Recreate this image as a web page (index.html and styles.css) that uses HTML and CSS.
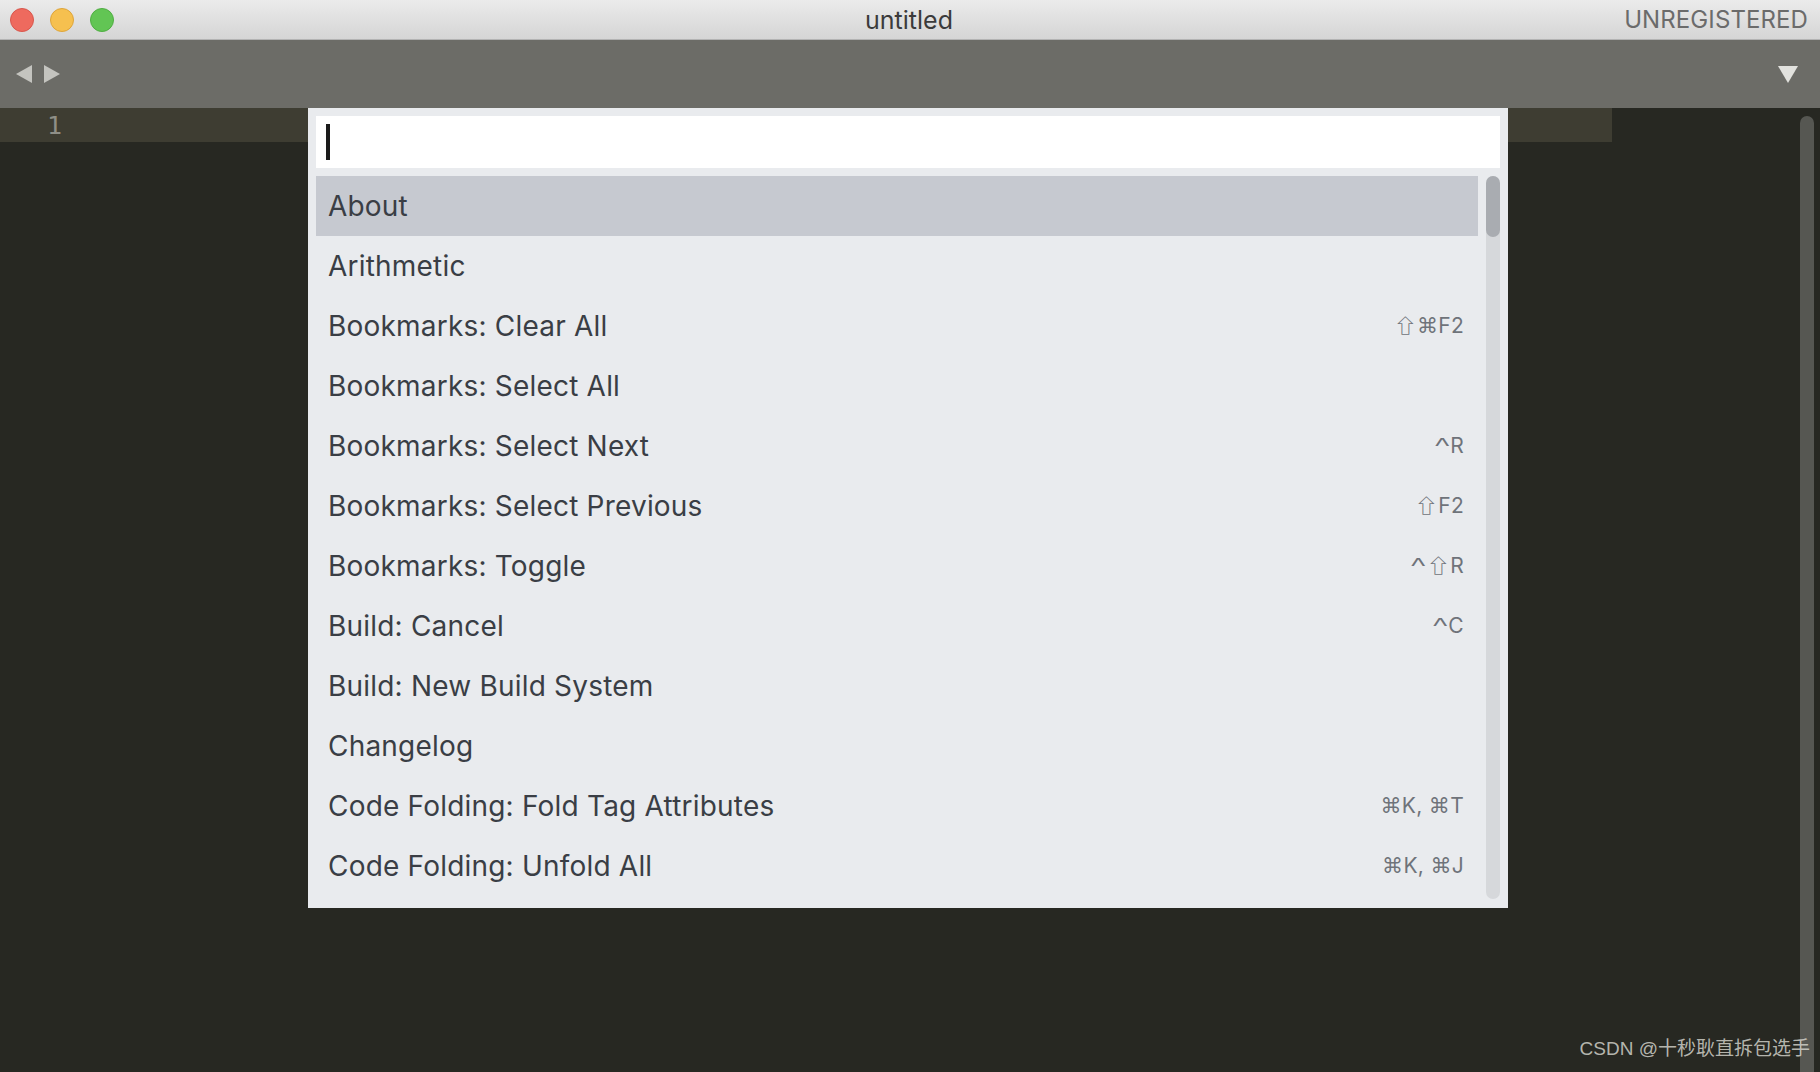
FILE: index.html
```html
<!DOCTYPE html>
<html>
<head>
<meta charset="utf-8">
<link rel="stylesheet" href="styles.css">
</head>
<body>
<div class="window">
  <header class="titlebar">
    <div class="lights">
      <span class="light red"></span>
      <span class="light yellow"></span>
      <span class="light green"></span>
    </div>
    <div class="title">untitled</div>
    <div class="unreg">UNREGISTERED</div>
  </header>
  <div class="tabbar">
    <div class="navs">
      <svg width="16" height="18" viewBox="0 0 16 18"><path d="M16 0 L0 9 L16 18 Z" fill="#c4c4bf"/></svg>
      <svg width="16" height="18" viewBox="0 0 16 18"><path d="M0 0 L16 9 L0 18 Z" fill="#c4c4bf"/></svg>
    </div>
    <svg class="dropdown" width="20" height="17" viewBox="0 0 20 17"><path d="M0 0 L20 0 L10 17 Z" fill="#e2e2de"/></svg>
  </div>
  <main class="editor">
    <div class="textarea">
      <div class="line current">
        <span class="gutter">1</span>
      </div>
    </div>
    <div class="minimap"></div>
    <div class="vscroll"></div>

    <div class="palette">
      <div class="input"><span class="caret"></span></div>
      <div class="listwrap">
        <ul class="list">
          <li class="item selected"><span class="name">About</span></li>
          <li class="item"><span class="name">Arithmetic</span></li>
          <li class="item"><span class="name">Bookmarks: Clear All</span><span class="key"><span class="shift">⇧</span><span class="cmd">⌘</span>F2</span></li>
          <li class="item"><span class="name">Bookmarks: Select All</span></li>
          <li class="item"><span class="name">Bookmarks: Select Next</span><span class="key"><span class="ctrl">^</span>R</span></li>
          <li class="item"><span class="name">Bookmarks: Select Previous</span><span class="key"><span class="shift">⇧</span>F2</span></li>
          <li class="item"><span class="name">Bookmarks: Toggle</span><span class="key"><span class="ctrl">^</span><span class="shift">⇧</span>R</span></li>
          <li class="item"><span class="name">Build: Cancel</span><span class="key"><span class="ctrl">^</span>C</span></li>
          <li class="item"><span class="name">Build: New Build System</span></li>
          <li class="item"><span class="name">Changelog</span></li>
          <li class="item"><span class="name">Code Folding: Fold Tag Attributes</span><span class="key"><span class="cmd">⌘</span>K, <span class="cmd">⌘</span>T</span></li>
          <li class="item"><span class="name">Code Folding: Unfold All</span><span class="key"><span class="cmd">⌘</span>K, <span class="cmd">⌘</span>J</span></li>
        </ul>
        <div class="track"><div class="thumb"></div></div>
      </div>
    </div>

    <div class="watermark">CSDN @十秒耿直拆包选手</div>
  </main>
</div>
</body>
</html>
```

FILE: styles.css
```css
* { box-sizing: border-box; }
html, body { margin: 0; padding: 0; }
body {
  width: 1820px;
  height: 1072px;
  overflow: hidden;
  background: #272822;
  font-family: Inter, "Noto Sans", sans-serif;
}
.window {
  display: flex;
  flex-direction: column;
  height: 1072px;
}
.titlebar {
  height: 40px;
  flex: none;
  display: grid;
  grid-template-columns: 1fr auto 1fr;
  align-items: center;
  background: linear-gradient(#ebebeb, #d5d5d5);
  border-bottom: 1px solid #b3b3b3;
  padding: 0 12px 0 10px;
}
.lights { display: flex; gap: 16px; }
.light {
  width: 24px; height: 24px; border-radius: 50%;
  display: block;
}
.red { background: #ee6a5e; border: 1px solid #d8574d; }
.yellow { background: #f6c04f; border: 1px solid #dea53a; }
.green { background: #62c554; border: 1px solid #50ae43; }
.title {
  text-align: center;
  font-size: 25px;
  color: #3b3b3b;
}
.unreg {
  justify-self: end;
  font-size: 24px;
  color: #6b6b6b;
  letter-spacing: 0.1px;
}
.tabbar {
  height: 68px;
  flex: none;
  background: #6c6c67;
  display: flex;
  align-items: center;
  justify-content: space-between;
  padding: 0 22px 0 16px;
}
.navs { display: flex; gap: 12px; }
.dropdown { display: block; }
.editor {
  flex: 1;
  display: flex;
  position: relative;
  padding-right: 6px;
}
.textarea { width: 1612px; flex: none; }
.line.current {
  height: 34px;
  background: #3e3d32;
  display: flex;
  align-items: center;
}
.gutter {
  width: 62px;
  text-align: right;
  font-family: "DejaVu Sans Mono", monospace;
  font-size: 25px;
  color: #8f8f87;
}
.minimap { flex: 1; }
.vscroll {
  width: 14px;
  margin-top: 8px;
  background: #565752;
  border-radius: 7px 7px 0 0;
}
.palette {
  position: absolute;
  left: 308px;
  top: 0;
  width: 1200px;
  height: 800px;
  background: #e9ebee;
  padding: 8px;
  display: flex;
  flex-direction: column;
  gap: 8px;
}
.input {
  height: 52px;
  flex: none;
  background: #fff;
  display: flex;
  align-items: center;
  padding-left: 10px;
}
.caret {
  width: 4px;
  height: 36px;
  background: #1b1b1b;
  display: block;
}
.listwrap {
  height: 723px;
  display: flex;
  gap: 8px;
}
.list {
  list-style: none;
  margin: 0;
  padding: 0;
  flex: 1;
  overflow: hidden;
}
.item {
  height: 60px;
  display: flex;
  align-items: center;
  justify-content: space-between;
  padding: 0 14px 0 12px;
}
.item.selected { background: #c6c9d0; }
.name {
  font-size: 28px;
  color: #3a3e45;
  letter-spacing: 0.2px;
}
.key {
  font-family: Inter, "DejaVu Sans", sans-serif;
  font-size: 21px;
  line-height: 24px;
  color: #6f737a;
  letter-spacing: 0.3px;
}
.shift {
  display: inline-block;
  font-family: "Noto Sans CJK JP", "DejaVu Sans", sans-serif;
  font-size: 19px;
  line-height: 20px;
  transform: scaleX(1.25);
  margin: 0 2px;
}
.cmd {
  font-family: "DejaVu Sans", sans-serif;
  font-size: 21px;
}
.ctrl {
  display: inline-block;
  font-family: "Liberation Sans", sans-serif;
  font-size: 22px;
  line-height: 20px;
  transform: scaleX(1.35);
  margin: 0 3px 0 2px;
}
.track {
  width: 14px;
  flex: none;
  background: #d6d8db;
  border-radius: 7px;
}
.thumb {
  height: 61px;
  background: #a9acb1;
  border-radius: 7px;
}
.watermark {
  position: absolute;
  right: 10px;
  bottom: 12px;
  font-family: "Liberation Sans", "Noto Sans CJK SC", sans-serif;
  font-size: 19px;
  color: rgba(220, 220, 212, 0.8);
}
```
